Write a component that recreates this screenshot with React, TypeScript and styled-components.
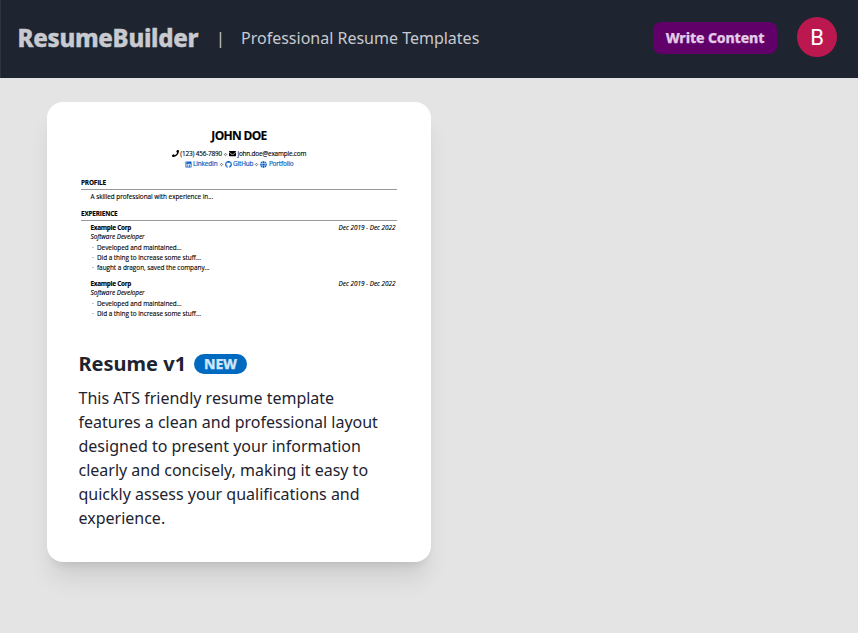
import React from "react";
import styled, { createGlobalStyle } from "styled-components";
import { FaPhone, FaEnvelope, FaLinkedin, FaGithub, FaGlobe } from "react-icons/fa";

const GlobalStyle = createGlobalStyle`
  * { box-sizing: border-box; margin: 0; padding: 0; }
  body { background: #e4e4e4; color: #1d2430; font-family: "Noto Sans", sans-serif; font-size: 16px; line-height: 24px; min-height: 633px; }
`;

const Header = styled.header`
  height: 78px;
  padding: 0 21px 2px 16.5px;
  border-left: 1px solid #2d3541;
  display: flex;
  align-items: center;
  background: #1e2530;
  color: #c8cad0;
`;
const Brand = styled.h1`
  font-size: 24px;
  font-weight: 800;
  line-height: 32px;
  width: 181.5px;
  letter-spacing: -0.28px;
  -webkit-text-stroke: 0.4px;
`;
const Divider = styled.span`
  width: 8px;
  margin: 0 17px;
  text-align: center;
`;
const Tagline = styled.span`
  flex: 1;
`;
const WriteButton = styled.button`
  height: 32px;
  width: 124px;
  padding-bottom: 1px;
  border: 0;
  border-radius: 8px;
  background: #600068;
  color: #e3cbe8;
  font: 800 14px "Noto Sans", sans-serif;
  letter-spacing: -0.12px;
  -webkit-text-stroke: 0.25px;
`;
const Avatar = styled.div`
  width: 40px;
  height: 40px;
  margin: -2px 0 0 20px;
  border-radius: 50%;
  display: grid;
  place-items: center;
  background: #bb1850;
  color: #fff;
  font: 22px Roboto, sans-serif;
`;
const Main = styled.main`
  padding: 24px 47px;
`;
const Card = styled.article`
  width: 384px;
  height: 460px;
  border-radius: 16px;
  background: #fff;
  box-shadow: 0 20px 25px -5px rgba(0, 0, 0, 0.1), 0 8px 10px -6px rgba(0, 0, 0, 0.1);
`;
const Preview = styled.div`
  height: 248px;
  padding: 27px 34px 0;
  color: #000;
  font: 6.4px/10px "Open Sans", sans-serif;
  letter-spacing: -0.03px;
  -webkit-text-stroke: 0.12px;
`;
const Name = styled.div`
  height: 19.5px;
  text-align: center;
  font-size: 12px;
  font-weight: 700;
  line-height: 14px;
  letter-spacing: -0.68px;
`;
const Contact = styled.div<{ $link?: boolean }>`
  display: flex;
  justify-content: center;
  align-items: center;
  height: 10.5px;
  letter-spacing: ${(p) => (p.$link ? "-0.12px" : "-0.17px")};
  color: ${(p) => (p.$link ? "#0d63c4" : "#000")};
  -webkit-text-stroke: ${(p) => (p.$link ? "0.2px" : "0.12px")};
  svg { width: 7px; height: 7px; margin-right: 1.5px; flex: none; }
`;
const Diamond = styled.i`
  width: 3px;
  height: 3px;
  margin: 1px 2px 0;
  border: 0.5px solid #555;
  transform: rotate(45deg) scale(0.85);
`;
const Section = styled.section`
  padding-top: 8.5px;
  & + & { padding-top: 7px; }
`;
const SectionTitle = styled.h3`
  height: 12px;
  border-bottom: 1px solid #999;
  font-size: 6.4px;
  line-height: 10px;
  letter-spacing: -0.17px;
`;
const Summary = styled.p`
  padding: 2px 9.5px 0;
  height: 12px;
`;
const Job = styled.div`
  padding: 2px 1.5px 0 9.5px;
  & + & { padding-top: 7px; }
`;
const JobRow = styled.div`
  display: flex;
  justify-content: space-between;
  height: 9px;
  em { letter-spacing: -0.03px; }
  b { letter-spacing: -0.27px; }
`;
const Role = styled.div`
  height: 11px;
  font-style: italic;
`;
const Points = styled.ul`
  list-style: none;
  padding-left: 6.5px;
  li { height: 9.8px; display: flex; }
  li::before { content: "·"; width: 5px; margin-left: -5px; color: #666; }
`;
const Body = styled.div`
  padding: 0 35px 32px 31.5px;
`;
const TitleRow = styled.div`
  display: flex;
  gap: 8px;
  align-items: center;
  height: 28px;
  margin-bottom: 8px;
  h2 { font-size: 20px; line-height: 28px; width: 107.5px; white-space: nowrap; }
`;
const Badge = styled.span`
  width: 53px;
  height: 20px;
  border-radius: 10px;
  background: #006ac0;
  color: #cfe5fa;
  text-align: center;
  font-size: 14px;
  line-height: 20px;
  font-weight: 800;
  letter-spacing: -0.1px;
  -webkit-text-stroke: 0.25px;
`;

const jobs = [
  ["Developed and maintained...", "Did a thing to increase some stuff...", "faught a dragon, saved the company..."],
  ["Developed and maintained...", "Did a thing to increase some stuff..."],
];

export default function App() {
  return (
    <>
      <GlobalStyle />
      <Header>
        <Brand>ResumeBuilder</Brand>
        <Divider>|</Divider>
        <Tagline>Professional Resume Templates</Tagline>
        <WriteButton>Write Content</WriteButton>
        <Avatar>B</Avatar>
      </Header>
      <Main>
        <Card>
          <Preview>
            <Name>JOHN DOE</Name>
            <Contact><FaPhone />(123) 456-7890<Diamond /><FaEnvelope />john.doe@example.com</Contact>
            <Contact $link><FaLinkedin />LinkedIn<Diamond /><FaGithub />GitHub<Diamond /><FaGlobe />Portfolio</Contact>
            <Section>
              <SectionTitle>PROFILE</SectionTitle>
              <Summary>A skilled professional with experience in...</Summary>
            </Section>
            <Section>
              <SectionTitle>EXPERIENCE</SectionTitle>
              {jobs.map((points, i) => (
                <Job key={i}>
                  <JobRow><b>Example Corp</b><em>Dec 2019 - Dec 2022</em></JobRow>
                  <Role>Software Developer</Role>
                  <Points>{points.map((p) => <li key={p}>{p}</li>)}</Points>
                </Job>
              ))}
            </Section>
          </Preview>
          <Body>
            <TitleRow><h2>Resume v1</h2><Badge>NEW</Badge></TitleRow>
            <p>This ATS friendly resume template features a clean and professional layout designed to present your information clearly and concisely, making it easy to quickly assess your qualifications and experience.</p>
          </Body>
        </Card>
      </Main>
    </>
  );
}
